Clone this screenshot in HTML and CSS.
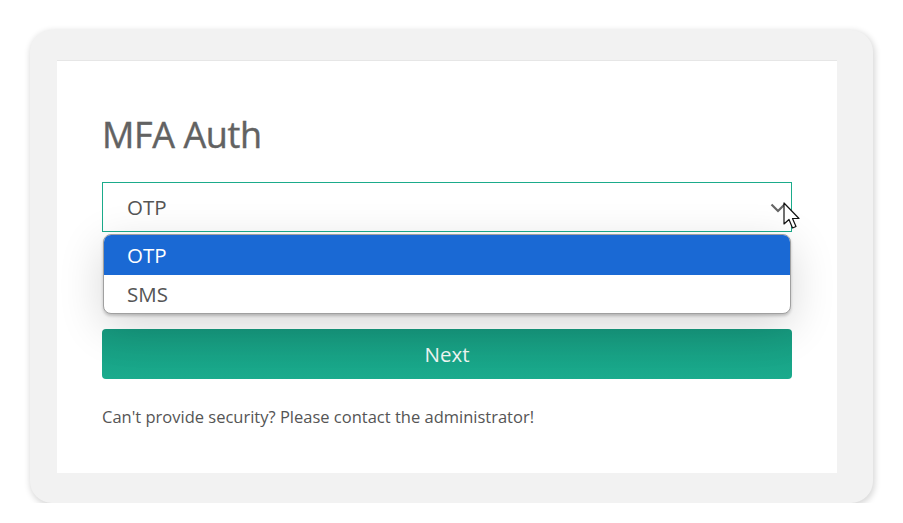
FILE: index.html
```html
<!DOCTYPE html>
<html lang="en">
<head>
<meta charset="utf-8">
<title>MFA Auth</title>
<link rel="stylesheet" href="styles.css">
</head>
<body>
<div class="frame">
  <div class="panel">
    <h1 class="title">MFA Auth</h1>
    <div class="select-wrap">
      <div class="select">
        <span class="select-value">OTP</span>
        <svg class="chevron" width="16" height="10" viewBox="0 0 16 10"><path d="M1.5 1.5 L8 8 L14.5 1.5" fill="none" stroke="#666666" stroke-width="2.2"/></svg>
      </div>
      <ul class="menu">
        <li class="option option-active">OTP</li>
        <li class="option">SMS</li>
      </ul>
      <svg class="cursor" width="20" height="30" viewBox="0 0 20 30"><path d="M1 1 L1 22 L6 17.5 L9.5 26 L13 24.5 L9.5 16.5 L16 16.5 Z" fill="#fff" stroke="#111" stroke-width="1.2" stroke-linejoin="round"/></svg>
    </div>
    <button class="next">Next</button>
    <p class="note">Can't provide security? Please contact the administrator!</p>
  </div>
</div>
</body>
</html>
```

FILE: styles.css
```css
html, body {
  margin: 0;
  padding: 0;
  background: #ffffff;
}
body {
  padding: 30px 30px 0 30px;
  font-family: "Open Sans", "Noto Sans", sans-serif;
}
.frame {
  width: 843px;
  height: 473px;
  box-sizing: border-box;
  background: #f2f2f2;
  border-radius: 22px;
  box-shadow: 1px 2px 6px 1px rgba(0,0,0,0.16);
  padding: 30px 36px 30px 27px;
}
.panel {
  background: #ffffff;
  height: 413px;
  box-sizing: border-box;
  border-top: 1px solid #e6e6e6;
  padding: 44px 45px 0 45px;
}
.title {
  margin: 0;
  font-size: 36px;
  font-weight: 400;
  color: #626262;
  line-height: 60px;
  letter-spacing: -0.4px;
  -webkit-text-stroke: 0.4px #626262;
}
.select-wrap {
  position: relative;
  margin-top: 17px;
}
.select {
  height: 50px;
  box-sizing: border-box;
  border: 1px solid #1bab8b;
  display: flex;
  align-items: center;
  justify-content: space-between;
  padding: 0 5px 0 24px;
  font-size: 20.5px;
  color: #555555;
}
.chevron {
  margin-top: 2px;
}
.menu {
  position: absolute;
  left: 1px;
  right: 1px;
  top: 52px;
  margin: 0;
  padding: 0;
  list-style: none;
  background: #ffffff;
  border: 1px solid #a0a0a0;
  border-radius: 8px;
  overflow: hidden;
  box-shadow: 0 12px 45px rgba(0,0,0,0.16), 0 2px 3px rgba(0,0,0,0.2);
  z-index: 2;
}
.option {
  height: 40px;
  display: flex;
  align-items: center;
  padding-left: 23px;
  font-size: 20.5px;
  color: #555555;
}
.option + .option {
  height: 38px;
}
.option-active {
  background: #1a69d4;
  color: #ffffff;
}
.cursor {
  position: absolute;
  left: 681px;
  top: 20px;
  z-index: 3;
}
.next {
  display: block;
  width: 100%;
  height: 50px;
  margin-top: 97px;
  border: none;
  border-radius: 4px;
  background: linear-gradient(to bottom, #16997e, #1aab8d);
  color: #eef6f3;
  font-family: "Open Sans", "Noto Sans", sans-serif;
  font-size: 20.5px;
}
.note {
  margin: 26px 0 0 0;
  font-size: 16.5px;
  color: #555555;
}
```
